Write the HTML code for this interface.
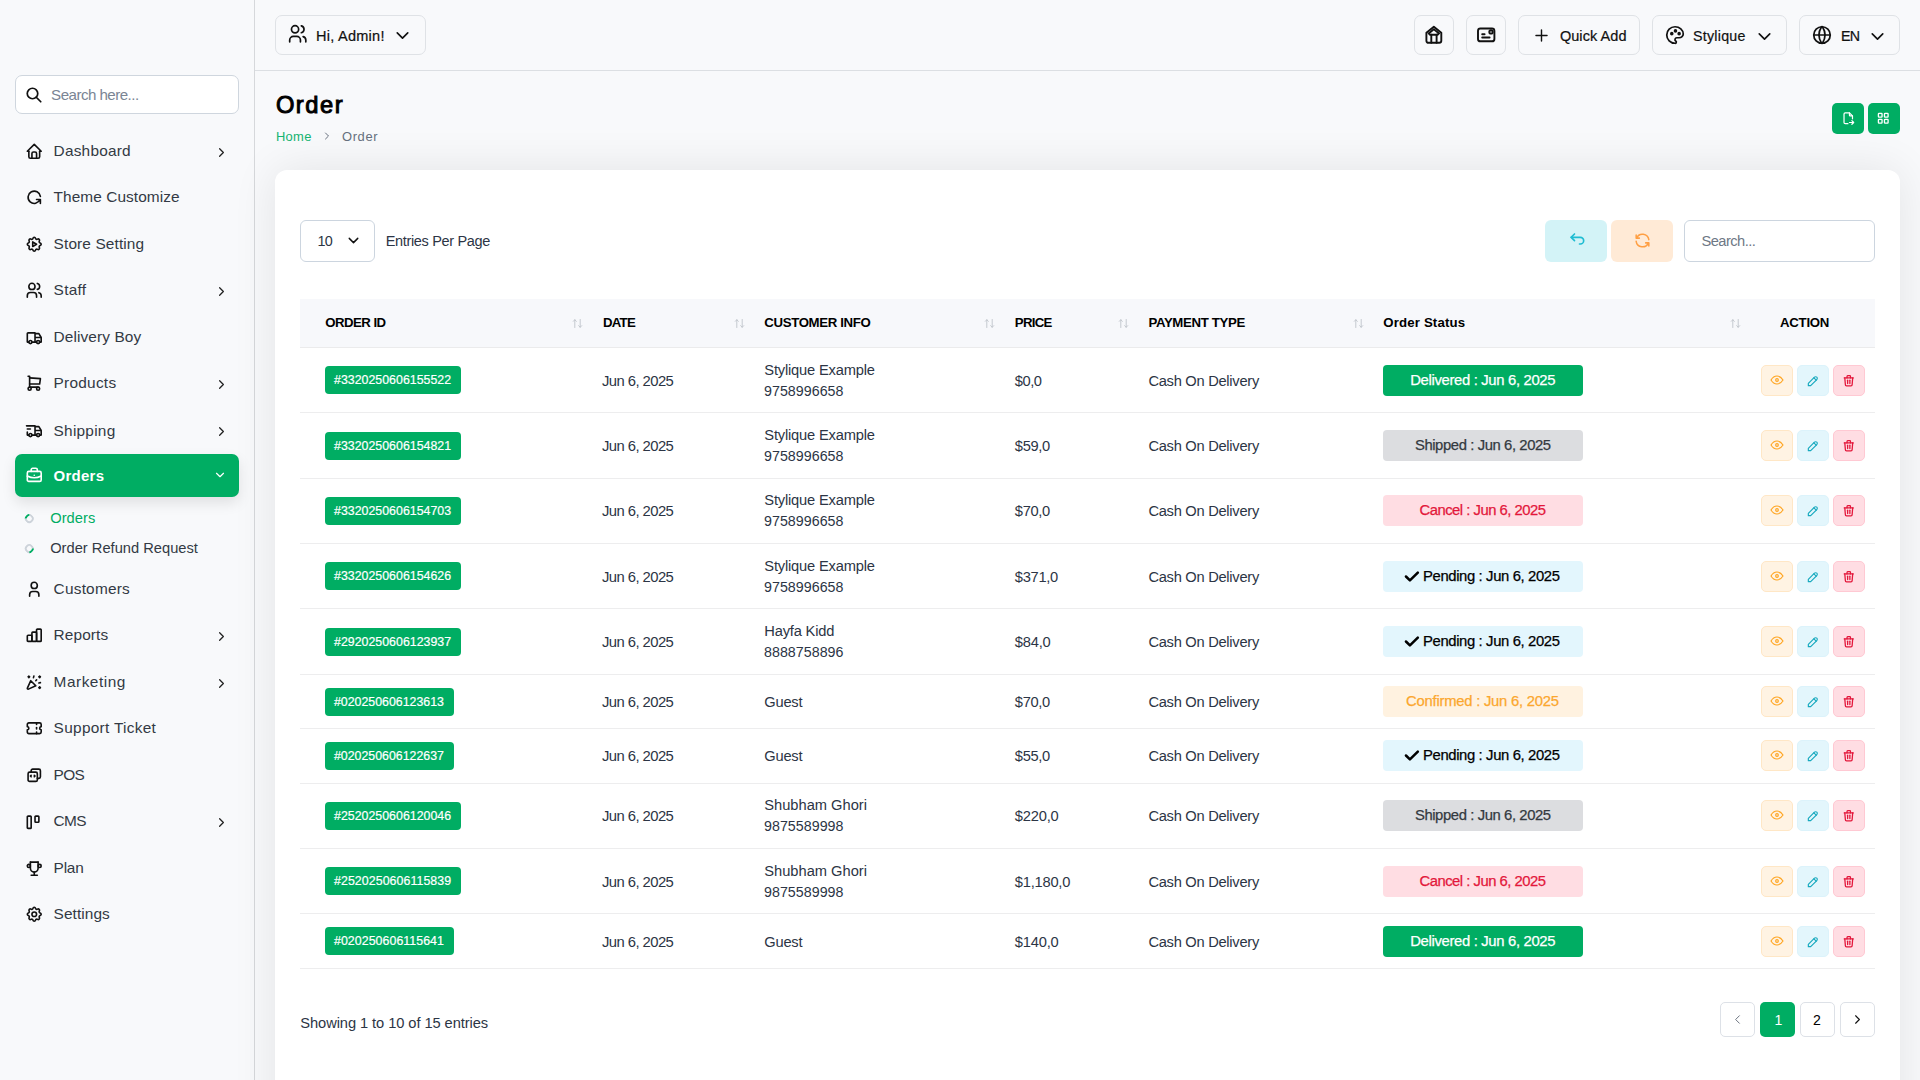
<!DOCTYPE html>
<html><head><meta charset="utf-8"><title>Order</title>
<style>
html,body{margin:0;padding:0;}
body{width:1920px;height:1080px;overflow:hidden;position:relative;background:#f8f9fb;font-family:"Liberation Sans",sans-serif;}
.t{position:absolute;white-space:nowrap;}
.b{position:absolute;}
.ic{position:absolute;overflow:visible;}
</style></head><body>
<div class="b" style="left:254px;top:0px;width:1px;height:1080px;background:#d6d8db;"></div>
<div class="b" style="left:15px;top:75px;width:222px;height:37px;background:#fff;border:1px solid #cfd6de;border-radius:7px;"></div>
<svg class="ic" style="left:25.3px;top:86px;width:18px;height:18px;" viewBox="0 0 24 24" fill="none" stroke="#111" stroke-width="2.3" stroke-linecap="round" stroke-linejoin="round"><path d="M10 10m-7 0a7 7 0 1 0 14 0a7 7 0 1 0 -14 0"/><path d="M21 21l-6 -6"/></svg>
<div class="t" style="left:51.10px;top:86.00px;font-size:15.12px;line-height:17px;letter-spacing:-0.527px;color:#7a8594;">Search here...</div>
<svg class="ic" style="left:25.1px;top:142.0px;width:18.5px;height:18.5px;" viewBox="0 0 24 24" fill="none" stroke="#111" stroke-width="2.1" stroke-linecap="round" stroke-linejoin="round"><path d="M5 12l-2 0l9 -9l9 9l-2 0"/><path d="M5 12v7a2 2 0 0 0 2 2h10a2 2 0 0 0 2 -2v-7"/><path d="M9 21v-6a2 2 0 0 1 2 -2h2a2 2 0 0 1 2 2v6"/></svg>
<div class="t" style="left:53.60px;top:142.00px;font-size:15.41px;line-height:17px;letter-spacing:0.204px;color:#333a44;">Dashboard</div>
<svg class="ic" style="left:213.5px;top:144.5px;width:15px;height:15px;" viewBox="0 0 24 24" fill="none" stroke="#222" stroke-width="2" stroke-linecap="round" stroke-linejoin="round"><path d="M9 6l6 6l-6 6"/></svg>
<svg class="ic" style="left:25.1px;top:188.0px;width:18.5px;height:18.5px;" viewBox="0 0 24 24" fill="none" stroke="#111" stroke-width="2.1" stroke-linecap="round" stroke-linejoin="round"><path d="M19.95 11a8 8 0 1 0 -.5 4m.5 5v-5h-5"/></svg>
<div class="t" style="left:53.60px;top:188.00px;font-size:15.41px;line-height:17px;letter-spacing:0.071px;color:#333a44;">Theme Customize</div>
<svg class="ic" style="left:25.1px;top:235.2px;width:18.5px;height:18.5px;" viewBox="0 0 24 24" fill="none" stroke="#111" stroke-width="2.1" stroke-linecap="round" stroke-linejoin="round"><path d="M10.325 4.317c.426 -1.756 2.924 -1.756 3.35 0a1.724 1.724 0 0 0 2.573 1.066c1.543 -.94 3.31 .826 2.37 2.37a1.724 1.724 0 0 0 1.065 2.572c1.756 .426 1.756 2.924 0 3.35a1.724 1.724 0 0 0 -1.066 2.573c.94 1.543 -.826 3.31 -2.37 2.37a1.724 1.724 0 0 0 -2.572 1.065c-.426 1.756 -2.924 1.756 -3.35 0a1.724 1.724 0 0 0 -2.573 -1.066c-1.543 .94 -3.31 -.826 -2.37 -2.37a1.724 1.724 0 0 0 -1.065 -2.572c-1.756 -.426 -1.756 -2.924 0 -3.35a1.724 1.724 0 0 0 1.066 -2.573c-.94 -1.543 .826 -3.31 2.37 -2.37c1 .608 2.296 .07 2.572 -1.065z"/><path d="M10 9v6l5 -3z"/></svg>
<div class="t" style="left:53.60px;top:235.00px;font-size:15.41px;line-height:17px;letter-spacing:0.119px;color:#333a44;">Store Setting</div>
<svg class="ic" style="left:25.1px;top:281.3px;width:18.5px;height:18.5px;" viewBox="0 0 24 24" fill="none" stroke="#111" stroke-width="2.1" stroke-linecap="round" stroke-linejoin="round"><path d="M9 7m-4 0a4 4 0 1 0 8 0a4 4 0 1 0 -8 0"/><path d="M3 21v-2a4 4 0 0 1 4 -4h4a4 4 0 0 1 4 4v2"/><path d="M16 3.13a4 4 0 0 1 0 7.75"/><path d="M21 21v-2a4 4 0 0 0 -3 -3.85"/></svg>
<div class="t" style="left:53.60px;top:281.00px;font-size:15.41px;line-height:17px;letter-spacing:0.264px;color:#333a44;">Staff</div>
<svg class="ic" style="left:213.5px;top:283.8px;width:15px;height:15px;" viewBox="0 0 24 24" fill="none" stroke="#222" stroke-width="2" stroke-linecap="round" stroke-linejoin="round"><path d="M9 6l6 6l-6 6"/></svg>
<svg class="ic" style="left:25.1px;top:328.5px;width:18.5px;height:18.5px;" viewBox="0 0 24 24" fill="none" stroke="#111" stroke-width="2.1" stroke-linecap="round" stroke-linejoin="round"><path d="M7 17m-2 0a2 2 0 1 0 4 0a2 2 0 1 0 -4 0"/><path d="M17 17m-2 0a2 2 0 1 0 4 0a2 2 0 1 0 -4 0"/><path d="M5 17h-2v-11a1 1 0 0 1 1 -1h9v12m-4 0h6m4 0h2v-6h-8m0 -5h5l3 5"/></svg>
<div class="t" style="left:53.60px;top:328.00px;font-size:15.41px;line-height:17px;letter-spacing:0.102px;color:#333a44;">Delivery Boy</div>
<svg class="ic" style="left:25.1px;top:374.3px;width:18.5px;height:18.5px;" viewBox="0 0 24 24" fill="none" stroke="#111" stroke-width="2.1" stroke-linecap="round" stroke-linejoin="round"><path d="M6 19m-2 0a2 2 0 1 0 4 0a2 2 0 1 0 -4 0"/><path d="M17 19m-2 0a2 2 0 1 0 4 0a2 2 0 1 0 -4 0"/><path d="M17 17h-11v-14h-2"/><path d="M6 5l14 1l-1 7h-13"/></svg>
<div class="t" style="left:53.60px;top:374.00px;font-size:15.41px;line-height:17px;letter-spacing:0.243px;color:#333a44;">Products</div>
<svg class="ic" style="left:213.5px;top:376.8px;width:15px;height:15px;" viewBox="0 0 24 24" fill="none" stroke="#222" stroke-width="2" stroke-linecap="round" stroke-linejoin="round"><path d="M9 6l6 6l-6 6"/></svg>
<svg class="ic" style="left:25.1px;top:421.6px;width:18.5px;height:18.5px;" viewBox="0 0 24 24" fill="none" stroke="#111" stroke-width="2.1" stroke-linecap="round" stroke-linejoin="round"><path d="M7 17m-2 0a2 2 0 1 0 4 0a2 2 0 1 0 -4 0"/><path d="M17 17m-2 0a2 2 0 1 0 4 0a2 2 0 1 0 -4 0"/><path d="M5 17h-2v-4m-1 -8h11v12m-4 0h6m4 0h2v-6h-8m0 -5h5l3 5"/><path d="M3 9l4 0"/></svg>
<div class="t" style="left:53.60px;top:422.00px;font-size:15.41px;line-height:17px;letter-spacing:0.234px;color:#333a44;">Shipping</div>
<svg class="ic" style="left:213.5px;top:424.1px;width:15px;height:15px;" viewBox="0 0 24 24" fill="none" stroke="#222" stroke-width="2" stroke-linecap="round" stroke-linejoin="round"><path d="M9 6l6 6l-6 6"/></svg>
<svg class="ic" style="left:25.1px;top:580.0px;width:18.5px;height:18.5px;" viewBox="0 0 24 24" fill="none" stroke="#111" stroke-width="2.1" stroke-linecap="round" stroke-linejoin="round"><path d="M8 7a4 4 0 1 0 8 0a4 4 0 0 0 -8 0"/><path d="M6 21v-2a4 4 0 0 1 4 -4h4a4 4 0 0 1 4 4v2"/></svg>
<div class="t" style="left:53.60px;top:580.00px;font-size:15.41px;line-height:17px;letter-spacing:0.213px;color:#333a44;">Customers</div>
<svg class="ic" style="left:25.1px;top:626.3px;width:18.5px;height:18.5px;" viewBox="0 0 24 24" fill="none" stroke="#111" stroke-width="2.1" stroke-linecap="round" stroke-linejoin="round"><path d="M3 13a1 1 0 0 1 1 -1h4a1 1 0 0 1 1 1v6a1 1 0 0 1 -1 1h-4a1 1 0 0 1 -1 -1z"/><path d="M9 9a1 1 0 0 1 1 -1h4a1 1 0 0 1 1 1v10a1 1 0 0 1 -1 1h-4a1 1 0 0 1 -1 -1z"/><path d="M15 5a1 1 0 0 1 1 -1h4a1 1 0 0 1 1 1v14a1 1 0 0 1 -1 1h-4a1 1 0 0 1 -1 -1z"/></svg>
<div class="t" style="left:53.60px;top:626.00px;font-size:15.41px;line-height:17px;letter-spacing:0.093px;color:#333a44;">Reports</div>
<svg class="ic" style="left:213.5px;top:628.8px;width:15px;height:15px;" viewBox="0 0 24 24" fill="none" stroke="#222" stroke-width="2" stroke-linecap="round" stroke-linejoin="round"><path d="M9 6l6 6l-6 6"/></svg>
<svg class="ic" style="left:25.1px;top:673.4px;width:18.5px;height:18.5px;" viewBox="0 0 24 24" fill="none" stroke="#111" stroke-width="2.1" stroke-linecap="round" stroke-linejoin="round"><path d="M4 5h2"/><path d="M5 4v2"/><path d="M11.5 4l-.5 2"/><path d="M18 5h2"/><path d="M19 4v2"/><path d="M15 9l-1 1"/><path d="M18 13l2 -.5"/><path d="M18 19h2"/><path d="M19 18v2"/><path d="M14 16.518l-6.518 -6.518l-4.39 9.58a1 1 0 0 0 1.329 1.329l9.579 -4.39z"/></svg>
<div class="t" style="left:53.60px;top:673.00px;font-size:15.41px;line-height:17px;letter-spacing:0.506px;color:#333a44;">Marketing</div>
<svg class="ic" style="left:213.5px;top:675.9px;width:15px;height:15px;" viewBox="0 0 24 24" fill="none" stroke="#222" stroke-width="2" stroke-linecap="round" stroke-linejoin="round"><path d="M9 6l6 6l-6 6"/></svg>
<svg class="ic" style="left:25.1px;top:719.2px;width:18.5px;height:18.5px;" viewBox="0 0 24 24" fill="none" stroke="#111" stroke-width="2.1" stroke-linecap="round" stroke-linejoin="round"><path d="M15 5l0 2"/><path d="M15 11l0 2"/><path d="M15 17l0 2"/><path d="M5 5h14a2 2 0 0 1 2 2v3a2 2 0 0 0 0 4v3a2 2 0 0 1 -2 2h-14a2 2 0 0 1 -2 -2v-3a2 2 0 0 0 0 -4v-3a2 2 0 0 1 2 -2"/></svg>
<div class="t" style="left:53.60px;top:719.00px;font-size:15.41px;line-height:17px;letter-spacing:0.294px;color:#333a44;">Support Ticket</div>
<svg class="ic" style="left:25.1px;top:766.1px;width:18.5px;height:18.5px;" viewBox="0 0 24 24" fill="none" stroke="#111" stroke-width="2.1" stroke-linecap="round" stroke-linejoin="round"><path d="M8 8v-2a2 2 0 0 1 2 -2h8a2 2 0 0 1 2 2v8a2 2 0 0 1 -2 2h-2"/><path d="M4 10a2 2 0 0 1 2 -2h8a2 2 0 0 1 2 2v8a2 2 0 0 1 -2 2h-8a2 2 0 0 1 -2 -2z"/><path d="M8 12l-1 1l1 1"/><path d="M12 12l1 1l-1 1"/></svg>
<div class="t" style="left:53.60px;top:766.00px;font-size:15.41px;line-height:17px;letter-spacing:-0.700px;color:#333a44;">POS</div>
<svg class="ic" style="left:25.1px;top:812.5px;width:18.5px;height:18.5px;" viewBox="0 0 24 24" fill="none" stroke="#111" stroke-width="2.1" stroke-linecap="round" stroke-linejoin="round"><path d="M4 4h3a1 1 0 0 1 1 1v14a1 1 0 0 1 -1 1h-3a1 1 0 0 1 -1 -1v-14a1 1 0 0 1 1 -1z"/><path d="M14 4h3a1 1 0 0 1 1 1v6a1 1 0 0 1 -1 1h-3a1 1 0 0 1 -1 -1v-6a1 1 0 0 1 1 -1z"/></svg>
<div class="t" style="left:53.60px;top:812.00px;font-size:15.41px;line-height:17px;letter-spacing:-0.700px;color:#333a44;">CMS</div>
<svg class="ic" style="left:213.5px;top:815.0px;width:15px;height:15px;" viewBox="0 0 24 24" fill="none" stroke="#222" stroke-width="2" stroke-linecap="round" stroke-linejoin="round"><path d="M9 6l6 6l-6 6"/></svg>
<svg class="ic" style="left:25.1px;top:859.0px;width:18.5px;height:18.5px;" viewBox="0 0 24 24" fill="none" stroke="#111" stroke-width="2.1" stroke-linecap="round" stroke-linejoin="round"><path d="M8 21l8 0"/><path d="M12 17l0 4"/><path d="M7 4l10 0"/><path d="M17 4v8a5 5 0 0 1 -10 0v-8"/><path d="M5 9m-2 0a2 2 0 1 0 4 0a2 2 0 1 0 -4 0"/><path d="M19 9m-2 0a2 2 0 1 0 4 0a2 2 0 1 0 -4 0"/></svg>
<div class="t" style="left:53.60px;top:859.00px;font-size:15.41px;line-height:17px;letter-spacing:-0.210px;color:#333a44;">Plan</div>
<svg class="ic" style="left:25.1px;top:905.0px;width:18.5px;height:18.5px;" viewBox="0 0 24 24" fill="none" stroke="#111" stroke-width="2.1" stroke-linecap="round" stroke-linejoin="round"><path d="M10.325 4.317c.426 -1.756 2.924 -1.756 3.35 0a1.724 1.724 0 0 0 2.573 1.066c1.543 -.94 3.31 .826 2.37 2.37a1.724 1.724 0 0 0 1.065 2.572c1.756 .426 1.756 2.924 0 3.35a1.724 1.724 0 0 0 -1.066 2.573c.94 1.543 -.826 3.31 -2.37 2.37a1.724 1.724 0 0 0 -2.572 1.065c-.426 1.756 -2.924 1.756 -3.35 0a1.724 1.724 0 0 0 -2.573 -1.066c-1.543 .94 -3.31 -.826 -2.37 -2.37a1.724 1.724 0 0 0 -1.065 -2.572c-1.756 -.426 -1.756 -2.924 0 -3.35a1.724 1.724 0 0 0 1.066 -2.573c-.94 -1.543 .826 -3.31 2.37 -2.37c1 .608 2.296 .07 2.572 -1.065z"/><path d="M9 12a3 3 0 1 0 6 0a3 3 0 0 0 -6 0"/></svg>
<div class="t" style="left:53.60px;top:905.00px;font-size:15.41px;line-height:17px;letter-spacing:0.076px;color:#333a44;">Settings</div>
<div class="b" style="left:15px;top:454px;width:224px;height:43px;background:#00ad63;border-radius:7px;box-shadow:0 6px 14px rgba(0,0,0,0.10);"></div>
<svg class="ic" style="left:25.1px;top:466.2px;width:18.5px;height:18.5px;" viewBox="0 0 24 24" fill="none" stroke="#fff" stroke-width="2.1" stroke-linecap="round" stroke-linejoin="round"><path d="M3 7m0 2a2 2 0 0 1 2 -2h14a2 2 0 0 1 2 2v9a2 2 0 0 1 -2 2h-14a2 2 0 0 1 -2 -2z"/><path d="M8 7v-2a2 2 0 0 1 2 -2h4a2 2 0 0 1 2 2v2"/><path d="M12 12l0 .01"/><path d="M3 13a20 20 0 0 0 18 0"/></svg>
<div class="t" style="left:53.50px;top:467.00px;font-size:14.97px;line-height:17px;letter-spacing:0.282px;color:#fff;font-weight:700;">Orders</div>
<svg class="ic" style="left:212.5px;top:468px;width:14px;height:14px;" viewBox="0 0 24 24" fill="none" stroke="#fff" stroke-width="2" stroke-linecap="round" stroke-linejoin="round"><path d="M6 9l6 6l6 -6"/></svg>
<div class="b" style="left:24.7px;top:513.7px;width:4.6px;height:4.6px;border:2px solid #cdd3da;border-radius:50%;border-left-color:#00ad63;transform:rotate(45deg);"></div>
<div class="t" style="left:50.20px;top:510.00px;font-size:14.68px;line-height:16px;letter-spacing:0.047px;color:#00ad63;">Orders</div>
<div class="b" style="left:24.7px;top:543.8px;width:4.6px;height:4.6px;border:2px solid #cdd3da;border-radius:50%;border-right-color:#00ad63;transform:rotate(45deg);"></div>
<div class="t" style="left:50.20px;top:540.00px;font-size:14.68px;line-height:16px;letter-spacing:0.005px;color:#333a44;">Order Refund Request</div>
<div class="b" style="left:255px;top:70px;width:1665px;height:1px;background:#dcdfe3;"></div>
<div class="b" style="left:275px;top:15px;width:149px;height:38px;background:#f8f9fb;border:1px solid #dfe2e6;border-radius:7px;"></div>
<svg class="ic" style="left:287px;top:22.5px;width:21.5px;height:21.5px;" viewBox="0 0 24 24" fill="none" stroke="#111" stroke-width="1.9" stroke-linecap="round" stroke-linejoin="round"><path d="M9 7m-4 0a4 4 0 1 0 8 0a4 4 0 1 0 -8 0"/><path d="M3 21v-2a4 4 0 0 1 4 -4h4a4 4 0 0 1 4 4v2"/><path d="M16 3.13a4 4 0 0 1 0 7.75"/><path d="M21 21v-2a4 4 0 0 0 -3 -3.85"/></svg>
<div class="t" style="left:316.00px;top:28.00px;font-size:14.53px;line-height:16px;letter-spacing:0.252px;color:#111;-webkit-text-stroke:0.2px #111;">Hi, Admin!</div>
<svg class="ic" style="left:392.4px;top:25px;width:21px;height:21px;" viewBox="0 0 24 24" fill="none" stroke="#111" stroke-width="1.9" stroke-linecap="round" stroke-linejoin="round"><path d="M6 9l6 6l6 -6"/></svg>
<div class="b" style="left:1414px;top:15px;width:38px;height:38px;background:#f8f9fb;border:1px solid #dfe2e6;border-radius:7px;"></div>
<svg class="ic" style="left:1420px;top:20px;width:30px;height:30px" viewBox="0 0 30 30" fill="none" stroke="#111" stroke-width="1.9" stroke-linecap="round" stroke-linejoin="round"><path d="M6.4 12.8L13.85 6.8L21.3 12.8V20.8A2 2 0 0 1 19.3 22.8H8.4A2 2 0 0 1 6.4 20.8Z"/><path d="M8.6 13.4L13.85 9.2L19.1 13.4L17.6 14.8H10.1Z"/><path d="M11.3 14.8V22.8M16.6 14.8V22.8"/></svg>
<div class="b" style="left:1466px;top:15px;width:38px;height:38px;background:#f8f9fb;border:1px solid #dfe2e6;border-radius:7px;"></div>
<svg class="ic" style="left:1470px;top:20px;width:30px;height:30px" viewBox="0 0 30 30" fill="none" stroke="#111" stroke-width="1.9" stroke-linecap="round" stroke-linejoin="round"><rect x="8" y="8.5" width="16.4" height="12.8" rx="2.4"/><circle cx="21" cy="11.9" r="1.7"/><path d="M12.2 14.2H14.6M12.2 17.5H19.6"/></svg>
<div class="b" style="left:1518px;top:15px;width:120px;height:38px;background:#f8f9fb;border:1px solid #dfe2e6;border-radius:7px;"></div>
<svg class="ic" style="left:1532.3px;top:26px;width:19px;height:19px;" viewBox="0 0 24 24" fill="none" stroke="#111" stroke-width="1.8" stroke-linecap="round" stroke-linejoin="round"><path d="M12 5l0 14"/><path d="M5 12l14 0"/></svg>
<div class="t" style="left:1559.90px;top:28.00px;font-size:14.53px;line-height:16px;letter-spacing:0.056px;color:#111;-webkit-text-stroke:0.2px #111;">Quick Add</div>
<div class="b" style="left:1652px;top:15px;width:133px;height:38px;background:#f8f9fb;border:1px solid #dfe2e6;border-radius:7px;"></div>
<svg class="ic" style="left:1664.1px;top:24.1px;width:22px;height:22px;" viewBox="0 0 24 24" fill="none" stroke="#111" stroke-width="1.9" stroke-linecap="round" stroke-linejoin="round"><path d="M12 21a9 9 0 0 1 0 -18c4.97 0 9 3.582 9 8c0 1.06 -.474 2.078 -1.318 2.828c-.844 .75 -1.989 1.172 -3.182 1.172h-2.5a2 2 0 0 0 -1 3.75a1.3 1.3 0 0 1 -1 2.25"/><path d="M8.5 10.5m-1 0a1 1 0 1 0 2 0a1 1 0 1 0 -2 0"/><path d="M12.5 7.5m-1 0a1 1 0 1 0 2 0a1 1 0 1 0 -2 0"/><path d="M16.5 10.5m-1 0a1 1 0 1 0 2 0a1 1 0 1 0 -2 0"/></svg>
<div class="t" style="left:1693.00px;top:28.00px;font-size:14.24px;line-height:16px;letter-spacing:0.260px;color:#111;-webkit-text-stroke:0.2px #111;">Stylique</div>
<svg class="ic" style="left:1753.8px;top:25.5px;width:21px;height:21px;" viewBox="0 0 24 24" fill="none" stroke="#111" stroke-width="1.9" stroke-linecap="round" stroke-linejoin="round"><path d="M6 9l6 6l6 -6"/></svg>
<div class="b" style="left:1799px;top:15px;width:99px;height:38px;background:#f8f9fb;border:1px solid #dfe2e6;border-radius:7px;"></div>
<svg class="ic" style="left:1811.1px;top:24.1px;width:22px;height:22px;" viewBox="0 0 24 24" fill="none" stroke="#111" stroke-width="1.9" stroke-linecap="round" stroke-linejoin="round"><path d="M3 12a9 9 0 1 0 18 0a9 9 0 0 0 -18 0"/><path d="M3.6 12h16.8"/><path d="M11.5 3a17 17 0 0 0 0 18"/><path d="M12.5 3a17 17 0 0 1 0 18"/></svg>
<div class="t" style="left:1841.00px;top:28.00px;font-size:14.24px;line-height:16px;letter-spacing:-0.700px;color:#111;-webkit-text-stroke:0.2px #111;">EN</div>
<svg class="ic" style="left:1866.6px;top:25.5px;width:21px;height:21px;" viewBox="0 0 24 24" fill="none" stroke="#111" stroke-width="1.9" stroke-linecap="round" stroke-linejoin="round"><path d="M6 9l6 6l6 -6"/></svg>
<div class="t" style="left:275.90px;top:92.00px;font-size:23.69px;line-height:26px;letter-spacing:1.536px;color:#000;-webkit-text-stroke:1.0px #000;">Order</div>
<div class="t" style="left:275.90px;top:129.00px;font-size:12.94px;line-height:15px;letter-spacing:0.329px;color:#16b472;">Home</div>
<svg class="ic" style="left:321px;top:130px;width:12px;height:12px;" viewBox="0 0 24 24" fill="none" stroke="#596270" stroke-width="1.8" stroke-linecap="round" stroke-linejoin="round"><path d="M9 6l6 6l-6 6"/></svg>
<div class="t" style="left:342.00px;top:129.00px;font-size:12.94px;line-height:15px;letter-spacing:0.609px;color:#66707e;">Order</div>
<div class="b" style="left:1832px;top:103px;width:32px;height:31px;background:#00ad63;border-radius:5px;"></div>
<svg class="ic" style="left:1841.2px;top:111.4px;width:14.5px;height:14.5px;" viewBox="0 0 24 24" fill="none" stroke="#fff" stroke-width="2" stroke-linecap="round" stroke-linejoin="round"><path d="M14 3v4a1 1 0 0 0 1 1h4"/><path d="M11.5 21h-4.5a2 2 0 0 1 -2 -2v-14a2 2 0 0 1 2 -2h7l5 5v5m-5 6h7m-3 -3l3 3l-3 3"/></svg>
<div class="b" style="left:1868px;top:103px;width:32px;height:31px;background:#00ad63;border-radius:5px;"></div>
<svg class="ic" style="left:1876.4px;top:111px;width:14.5px;height:14.5px;" viewBox="0 0 24 24" fill="none" stroke="#fff" stroke-width="2.2" stroke-linecap="round" stroke-linejoin="round"><path d="M5 4h4a1 1 0 0 1 1 1v4a1 1 0 0 1 -1 1h-4a1 1 0 0 1 -1 -1v-4a1 1 0 0 1 1 -1"/><path d="M15 4h4a1 1 0 0 1 1 1v4a1 1 0 0 1 -1 1h-4a1 1 0 0 1 -1 -1v-4a1 1 0 0 1 1 -1"/><path d="M5 14h4a1 1 0 0 1 1 1v4a1 1 0 0 1 -1 1h-4a1 1 0 0 1 -1 -1v-4a1 1 0 0 1 1 -1"/><path d="M15 14h4a1 1 0 0 1 1 1v4a1 1 0 0 1 -1 1h-4a1 1 0 0 1 -1 -1v-4a1 1 0 0 1 1 -1"/></svg>
<div class="b" style="left:275px;top:170px;width:1625px;height:1000px;background:#fff;border-radius:12px;box-shadow:0 0 45px rgba(0,0,0,0.09);"></div>
<div class="b" style="left:300px;top:220px;width:73px;height:40px;background:#fff;border:1px solid #ccd5df;border-radius:6px;"></div>
<div class="t" style="left:317.50px;top:233.00px;font-size:14.39px;line-height:16px;letter-spacing:-0.700px;color:#2c3545;">10</div>
<svg class="ic" style="left:344.5px;top:231.8px;width:17px;height:17px;" viewBox="0 0 24 24" fill="none" stroke="#111" stroke-width="2" stroke-linecap="round" stroke-linejoin="round"><path d="M6 9l6 6l6 -6"/></svg>
<div class="t" style="left:385.70px;top:233.00px;font-size:14.53px;line-height:16px;letter-spacing:-0.339px;color:#2c3545;">Entries Per Page</div>
<div class="b" style="left:1545px;top:220px;width:62px;height:42px;background:#d3f3f7;border-radius:6px;"></div>
<svg class="ic" style="left:1567px;top:229px;width:20px;height:20px;" viewBox="0 0 24 24" fill="none" stroke="#1fbcd2" stroke-width="2" stroke-linecap="round" stroke-linejoin="round"><path d="M9 14l-4 -4l4 -4"/><path d="M5 10h11a4 4 0 1 1 0 8h-1"/></svg>
<div class="b" style="left:1611px;top:220px;width:62px;height:42px;background:#ffead6;border-radius:6px;"></div>
<svg class="ic" style="left:1633px;top:231px;width:19px;height:19px;" viewBox="0 0 24 24" fill="none" stroke="#ff9f43" stroke-width="1.9" stroke-linecap="round" stroke-linejoin="round"><path d="M20 11a8.1 8.1 0 0 0 -15.5 -2m-.5 -4v4h4"/><path d="M4 13a8.1 8.1 0 0 0 15.5 2m.5 4v-4h-4"/></svg>
<div class="b" style="left:1684px;top:220px;width:189px;height:40px;background:#fff;border:1px solid #ccd5df;border-radius:6px;"></div>
<div class="t" style="left:1701.50px;top:233.00px;font-size:14.68px;line-height:16px;letter-spacing:-0.544px;color:#6e7885;">Search...</div>
<div class="b" style="left:300px;top:299px;width:1575px;height:48px;background:#f7f8fb;"></div>
<div class="b" style="left:300px;top:347px;width:1575px;height:1px;background:#ebebec;"></div>
<div class="t" style="left:325.30px;top:315.00px;font-size:13.23px;line-height:15px;letter-spacing:-0.552px;color:#000;font-weight:700;">ORDER ID</div>
<svg class="ic" style="left:572px;top:318.5px;width:11px;height:9px" viewBox="0 0 11 10" fill="none" stroke="#bfc4cb" stroke-width="1" stroke-linecap="round" stroke-linejoin="round"><path d="M2.5 9.5V0.8M0.8 2.6L2.5 0.8L4.2 2.6"/><path d="M8.5 0.5V9.2M6.8 7.4L8.5 9.2L10.2 7.4"/></svg>
<div class="t" style="left:602.90px;top:315.00px;font-size:13.23px;line-height:15px;letter-spacing:-0.700px;color:#000;font-weight:700;">DATE</div>
<svg class="ic" style="left:733.6px;top:318.5px;width:11px;height:9px" viewBox="0 0 11 10" fill="none" stroke="#bfc4cb" stroke-width="1" stroke-linecap="round" stroke-linejoin="round"><path d="M2.5 9.5V0.8M0.8 2.6L2.5 0.8L4.2 2.6"/><path d="M8.5 0.5V9.2M6.8 7.4L8.5 9.2L10.2 7.4"/></svg>
<div class="t" style="left:764.30px;top:315.00px;font-size:13.23px;line-height:15px;letter-spacing:-0.352px;color:#000;font-weight:700;">CUSTOMER INFO</div>
<svg class="ic" style="left:984.4px;top:318.5px;width:11px;height:9px" viewBox="0 0 11 10" fill="none" stroke="#bfc4cb" stroke-width="1" stroke-linecap="round" stroke-linejoin="round"><path d="M2.5 9.5V0.8M0.8 2.6L2.5 0.8L4.2 2.6"/><path d="M8.5 0.5V9.2M6.8 7.4L8.5 9.2L10.2 7.4"/></svg>
<div class="t" style="left:1014.80px;top:315.00px;font-size:13.23px;line-height:15px;letter-spacing:-0.700px;color:#000;font-weight:700;">PRICE</div>
<svg class="ic" style="left:1118.3px;top:318.5px;width:11px;height:9px" viewBox="0 0 11 10" fill="none" stroke="#bfc4cb" stroke-width="1" stroke-linecap="round" stroke-linejoin="round"><path d="M2.5 9.5V0.8M0.8 2.6L2.5 0.8L4.2 2.6"/><path d="M8.5 0.5V9.2M6.8 7.4L8.5 9.2L10.2 7.4"/></svg>
<div class="t" style="left:1148.40px;top:315.00px;font-size:13.23px;line-height:15px;letter-spacing:-0.336px;color:#000;font-weight:700;">PAYMENT TYPE</div>
<svg class="ic" style="left:1352.9px;top:318.5px;width:11px;height:9px" viewBox="0 0 11 10" fill="none" stroke="#bfc4cb" stroke-width="1" stroke-linecap="round" stroke-linejoin="round"><path d="M2.5 9.5V0.8M0.8 2.6L2.5 0.8L4.2 2.6"/><path d="M8.5 0.5V9.2M6.8 7.4L8.5 9.2L10.2 7.4"/></svg>
<div class="t" style="left:1383.20px;top:315.00px;font-size:13.23px;line-height:15px;letter-spacing:0.171px;color:#000;font-weight:700;">Order Status</div>
<svg class="ic" style="left:1729.8px;top:318.5px;width:11px;height:9px" viewBox="0 0 11 10" fill="none" stroke="#bfc4cb" stroke-width="1" stroke-linecap="round" stroke-linejoin="round"><path d="M2.5 9.5V0.8M0.8 2.6L2.5 0.8L4.2 2.6"/><path d="M8.5 0.5V9.2M6.8 7.4L8.5 9.2L10.2 7.4"/></svg>
<div class="t" style="left:1780.00px;top:315.00px;font-size:13.23px;line-height:15px;letter-spacing:-0.260px;color:#000;font-weight:700;">ACTION</div>
<div class="b" style="left:300px;top:412px;width:1575px;height:1px;background:#ededee;"></div>
<div class="b" style="left:325px;top:366px;width:136px;height:28px;background:#00ad63;border-radius:4px;"></div>
<div class="t" style="left:334.00px;top:373.00px;font-size:12.35px;line-height:14px;letter-spacing:0.024px;color:#fff;-webkit-text-stroke:0.2px #fff;">#3320250606155522</div>
<div class="t" style="left:602.00px;top:373.00px;font-size:14.83px;line-height:16px;letter-spacing:-0.569px;color:#2c3545;">Jun 6, 2025</div>
<div class="t" style="left:764.30px;top:362.00px;font-size:14.68px;line-height:16px;letter-spacing:-0.181px;color:#2c3545;">Stylique Example</div>
<div class="t" style="left:764.00px;top:383.00px;font-size:14.24px;line-height:16px;letter-spacing:0.030px;color:#2c3545;">9758996658</div>
<div class="t" style="left:1014.80px;top:373.00px;font-size:14.68px;line-height:16px;letter-spacing:-0.456px;color:#2c3545;">$0,0</div>
<div class="t" style="left:1148.40px;top:373.00px;font-size:14.68px;line-height:16px;letter-spacing:-0.276px;color:#2c3545;">Cash On Delivery</div>
<div class="b" style="left:1383px;top:365px;width:200px;height:31px;background:#00ad63;border-radius:4px;"></div>
<div class="t" style="left:1410.20px;top:372.00px;font-size:14.83px;line-height:16px;letter-spacing:-0.326px;color:#fff;-webkit-text-stroke:0.25px #fff;">Delivered : Jun 6, 2025</div>
<div class="b" style="left:1761px;top:365px;width:30px;height:29px;background:#fff3e3;border:1px solid #ffe7c6;border-radius:5px;"></div>
<svg class="ic" style="left:1768.5px;top:372.4px;width:16px;height:16px;" viewBox="0 0 24 24" fill="none" stroke="#ffa41f" stroke-width="1.7" stroke-linecap="round" stroke-linejoin="round"><path d="M10 12a2 2 0 1 0 4 0a2 2 0 0 0 -4 0"/><path d="M21 12c-2.4 4 -5.4 6 -9 6c-3.6 0 -6.6 -2 -9 -6c2.4 -4 5.4 -6 9 -6c3.6 0 6.6 2 9 6"/></svg>
<div class="b" style="left:1797px;top:365px;width:30px;height:29px;background:#e3f6fc;border:1px solid #dcf3fb;border-radius:5px;"></div>
<svg class="ic" style="left:1805.9px;top:374.1px;width:14px;height:14px;" viewBox="0 0 24 24" fill="none" stroke="#17a9be" stroke-width="2" stroke-linecap="round" stroke-linejoin="round"><path d="M4 20h4l10.5 -10.5a2.828 2.828 0 1 0 -4 -4l-10.5 10.5v4"/><path d="M13.5 6.5l4 4"/></svg>
<div class="b" style="left:1833px;top:365px;width:30px;height:29px;background:#ffdde3;border:1px solid #ffc9d3;border-radius:5px;"></div>
<svg class="ic" style="left:1842px;top:373.7px;width:13.5px;height:13.5px;" viewBox="0 0 24 24" fill="none" stroke="#e3173b" stroke-width="2.3" stroke-linecap="round" stroke-linejoin="round"><path d="M4 7l16 0"/><path d="M10 11l0 6"/><path d="M14 11l0 6"/><path d="M5 7l1 12a2 2 0 0 0 2 2h8a2 2 0 0 0 2 -2l1 -12"/><path d="M9 7v-3a1 1 0 0 1 1 -1h4a1 1 0 0 1 1 1v3"/></svg>
<div class="b" style="left:300px;top:478px;width:1575px;height:1px;background:#ededee;"></div>
<div class="b" style="left:325px;top:432px;width:136px;height:28px;background:#00ad63;border-radius:4px;"></div>
<div class="t" style="left:334.00px;top:439.00px;font-size:12.35px;line-height:14px;letter-spacing:0.024px;color:#fff;-webkit-text-stroke:0.2px #fff;">#3320250606154821</div>
<div class="t" style="left:602.00px;top:438.00px;font-size:14.83px;line-height:16px;letter-spacing:-0.569px;color:#2c3545;">Jun 6, 2025</div>
<div class="t" style="left:764.30px;top:427.00px;font-size:14.68px;line-height:16px;letter-spacing:-0.181px;color:#2c3545;">Stylique Example</div>
<div class="t" style="left:764.00px;top:448.00px;font-size:14.24px;line-height:16px;letter-spacing:0.030px;color:#2c3545;">9758996658</div>
<div class="t" style="left:1014.80px;top:438.00px;font-size:14.68px;line-height:16px;letter-spacing:-0.307px;color:#2c3545;">$59,0</div>
<div class="t" style="left:1148.40px;top:438.00px;font-size:14.68px;line-height:16px;letter-spacing:-0.276px;color:#2c3545;">Cash On Delivery</div>
<div class="b" style="left:1383px;top:430px;width:200px;height:31px;background:#dcdde0;border-radius:4px;"></div>
<div class="t" style="left:1414.90px;top:437.00px;font-size:14.83px;line-height:16px;letter-spacing:-0.403px;color:#343a40;-webkit-text-stroke:0.25px #343a40;">Shipped : Jun 6, 2025</div>
<div class="b" style="left:1761px;top:430px;width:30px;height:29px;background:#fff3e3;border:1px solid #ffe7c6;border-radius:5px;"></div>
<svg class="ic" style="left:1768.5px;top:437.4px;width:16px;height:16px;" viewBox="0 0 24 24" fill="none" stroke="#ffa41f" stroke-width="1.7" stroke-linecap="round" stroke-linejoin="round"><path d="M10 12a2 2 0 1 0 4 0a2 2 0 0 0 -4 0"/><path d="M21 12c-2.4 4 -5.4 6 -9 6c-3.6 0 -6.6 -2 -9 -6c2.4 -4 5.4 -6 9 -6c3.6 0 6.6 2 9 6"/></svg>
<div class="b" style="left:1797px;top:430px;width:30px;height:29px;background:#e3f6fc;border:1px solid #dcf3fb;border-radius:5px;"></div>
<svg class="ic" style="left:1805.9px;top:439.1px;width:14px;height:14px;" viewBox="0 0 24 24" fill="none" stroke="#17a9be" stroke-width="2" stroke-linecap="round" stroke-linejoin="round"><path d="M4 20h4l10.5 -10.5a2.828 2.828 0 1 0 -4 -4l-10.5 10.5v4"/><path d="M13.5 6.5l4 4"/></svg>
<div class="b" style="left:1833px;top:430px;width:30px;height:29px;background:#ffdde3;border:1px solid #ffc9d3;border-radius:5px;"></div>
<svg class="ic" style="left:1842px;top:438.7px;width:13.5px;height:13.5px;" viewBox="0 0 24 24" fill="none" stroke="#e3173b" stroke-width="2.3" stroke-linecap="round" stroke-linejoin="round"><path d="M4 7l16 0"/><path d="M10 11l0 6"/><path d="M14 11l0 6"/><path d="M5 7l1 12a2 2 0 0 0 2 2h8a2 2 0 0 0 2 -2l1 -12"/><path d="M9 7v-3a1 1 0 0 1 1 -1h4a1 1 0 0 1 1 1v3"/></svg>
<div class="b" style="left:300px;top:543px;width:1575px;height:1px;background:#ededee;"></div>
<div class="b" style="left:325px;top:497px;width:136px;height:28px;background:#00ad63;border-radius:4px;"></div>
<div class="t" style="left:334.00px;top:504.00px;font-size:12.35px;line-height:14px;letter-spacing:0.024px;color:#fff;-webkit-text-stroke:0.2px #fff;">#3320250606154703</div>
<div class="t" style="left:602.00px;top:503.00px;font-size:14.83px;line-height:16px;letter-spacing:-0.569px;color:#2c3545;">Jun 6, 2025</div>
<div class="t" style="left:764.30px;top:492.00px;font-size:14.68px;line-height:16px;letter-spacing:-0.181px;color:#2c3545;">Stylique Example</div>
<div class="t" style="left:764.00px;top:513.00px;font-size:14.24px;line-height:16px;letter-spacing:0.030px;color:#2c3545;">9758996658</div>
<div class="t" style="left:1014.80px;top:503.00px;font-size:14.68px;line-height:16px;letter-spacing:-0.307px;color:#2c3545;">$70,0</div>
<div class="t" style="left:1148.40px;top:503.00px;font-size:14.68px;line-height:16px;letter-spacing:-0.276px;color:#2c3545;">Cash On Delivery</div>
<div class="b" style="left:1383px;top:495px;width:200px;height:31px;background:#ffdde3;border-radius:4px;"></div>
<div class="t" style="left:1419.50px;top:502.00px;font-size:14.83px;line-height:16px;letter-spacing:-0.500px;color:#e3173b;-webkit-text-stroke:0.25px #e3173b;">Cancel : Jun 6, 2025</div>
<div class="b" style="left:1761px;top:495px;width:30px;height:29px;background:#fff3e3;border:1px solid #ffe7c6;border-radius:5px;"></div>
<svg class="ic" style="left:1768.5px;top:502.4px;width:16px;height:16px;" viewBox="0 0 24 24" fill="none" stroke="#ffa41f" stroke-width="1.7" stroke-linecap="round" stroke-linejoin="round"><path d="M10 12a2 2 0 1 0 4 0a2 2 0 0 0 -4 0"/><path d="M21 12c-2.4 4 -5.4 6 -9 6c-3.6 0 -6.6 -2 -9 -6c2.4 -4 5.4 -6 9 -6c3.6 0 6.6 2 9 6"/></svg>
<div class="b" style="left:1797px;top:495px;width:30px;height:29px;background:#e3f6fc;border:1px solid #dcf3fb;border-radius:5px;"></div>
<svg class="ic" style="left:1805.9px;top:504.1px;width:14px;height:14px;" viewBox="0 0 24 24" fill="none" stroke="#17a9be" stroke-width="2" stroke-linecap="round" stroke-linejoin="round"><path d="M4 20h4l10.5 -10.5a2.828 2.828 0 1 0 -4 -4l-10.5 10.5v4"/><path d="M13.5 6.5l4 4"/></svg>
<div class="b" style="left:1833px;top:495px;width:30px;height:29px;background:#ffdde3;border:1px solid #ffc9d3;border-radius:5px;"></div>
<svg class="ic" style="left:1842px;top:503.7px;width:13.5px;height:13.5px;" viewBox="0 0 24 24" fill="none" stroke="#e3173b" stroke-width="2.3" stroke-linecap="round" stroke-linejoin="round"><path d="M4 7l16 0"/><path d="M10 11l0 6"/><path d="M14 11l0 6"/><path d="M5 7l1 12a2 2 0 0 0 2 2h8a2 2 0 0 0 2 -2l1 -12"/><path d="M9 7v-3a1 1 0 0 1 1 -1h4a1 1 0 0 1 1 1v3"/></svg>
<div class="b" style="left:300px;top:608px;width:1575px;height:1px;background:#ededee;"></div>
<div class="b" style="left:325px;top:562px;width:136px;height:28px;background:#00ad63;border-radius:4px;"></div>
<div class="t" style="left:334.00px;top:569.00px;font-size:12.35px;line-height:14px;letter-spacing:0.024px;color:#fff;-webkit-text-stroke:0.2px #fff;">#3320250606154626</div>
<div class="t" style="left:602.00px;top:569.00px;font-size:14.83px;line-height:16px;letter-spacing:-0.569px;color:#2c3545;">Jun 6, 2025</div>
<div class="t" style="left:764.30px;top:558.00px;font-size:14.68px;line-height:16px;letter-spacing:-0.181px;color:#2c3545;">Stylique Example</div>
<div class="t" style="left:764.00px;top:579.00px;font-size:14.24px;line-height:16px;letter-spacing:0.030px;color:#2c3545;">9758996658</div>
<div class="t" style="left:1014.80px;top:569.00px;font-size:14.68px;line-height:16px;letter-spacing:-0.281px;color:#2c3545;">$371,0</div>
<div class="t" style="left:1148.40px;top:569.00px;font-size:14.68px;line-height:16px;letter-spacing:-0.276px;color:#2c3545;">Cash On Delivery</div>
<div class="b" style="left:1383px;top:561px;width:200px;height:31px;background:#e3f6fd;border-radius:4px;"></div>
<svg class="ic" style="left:1402px;top:567px;width:19px;height:19px;" viewBox="0 0 24 24" fill="none" stroke="#000" stroke-width="3.2" stroke-linecap="round" stroke-linejoin="round"><path d="M5 12l5 5l10 -10"/></svg>
<div class="t" style="left:1423.00px;top:568.00px;font-size:14.83px;line-height:16px;letter-spacing:-0.368px;color:#000;-webkit-text-stroke:0.25px #000;">Pending : Jun 6, 2025</div>
<div class="b" style="left:1761px;top:561px;width:30px;height:29px;background:#fff3e3;border:1px solid #ffe7c6;border-radius:5px;"></div>
<svg class="ic" style="left:1768.5px;top:568.4px;width:16px;height:16px;" viewBox="0 0 24 24" fill="none" stroke="#ffa41f" stroke-width="1.7" stroke-linecap="round" stroke-linejoin="round"><path d="M10 12a2 2 0 1 0 4 0a2 2 0 0 0 -4 0"/><path d="M21 12c-2.4 4 -5.4 6 -9 6c-3.6 0 -6.6 -2 -9 -6c2.4 -4 5.4 -6 9 -6c3.6 0 6.6 2 9 6"/></svg>
<div class="b" style="left:1797px;top:561px;width:30px;height:29px;background:#e3f6fc;border:1px solid #dcf3fb;border-radius:5px;"></div>
<svg class="ic" style="left:1805.9px;top:570.1px;width:14px;height:14px;" viewBox="0 0 24 24" fill="none" stroke="#17a9be" stroke-width="2" stroke-linecap="round" stroke-linejoin="round"><path d="M4 20h4l10.5 -10.5a2.828 2.828 0 1 0 -4 -4l-10.5 10.5v4"/><path d="M13.5 6.5l4 4"/></svg>
<div class="b" style="left:1833px;top:561px;width:30px;height:29px;background:#ffdde3;border:1px solid #ffc9d3;border-radius:5px;"></div>
<svg class="ic" style="left:1842px;top:569.7px;width:13.5px;height:13.5px;" viewBox="0 0 24 24" fill="none" stroke="#e3173b" stroke-width="2.3" stroke-linecap="round" stroke-linejoin="round"><path d="M4 7l16 0"/><path d="M10 11l0 6"/><path d="M14 11l0 6"/><path d="M5 7l1 12a2 2 0 0 0 2 2h8a2 2 0 0 0 2 -2l1 -12"/><path d="M9 7v-3a1 1 0 0 1 1 -1h4a1 1 0 0 1 1 1v3"/></svg>
<div class="b" style="left:300px;top:674px;width:1575px;height:1px;background:#ededee;"></div>
<div class="b" style="left:325px;top:628px;width:136px;height:28px;background:#00ad63;border-radius:4px;"></div>
<div class="t" style="left:334.00px;top:635.00px;font-size:12.35px;line-height:14px;letter-spacing:0.024px;color:#fff;-webkit-text-stroke:0.2px #fff;">#2920250606123937</div>
<div class="t" style="left:602.00px;top:634.00px;font-size:14.83px;line-height:16px;letter-spacing:-0.569px;color:#2c3545;">Jun 6, 2025</div>
<div class="t" style="left:764.30px;top:623.00px;font-size:14.68px;line-height:16px;letter-spacing:-0.180px;color:#2c3545;">Hayfa Kidd</div>
<div class="t" style="left:764.00px;top:644.00px;font-size:14.24px;line-height:16px;letter-spacing:0.030px;color:#2c3545;">8888758896</div>
<div class="t" style="left:1014.80px;top:634.00px;font-size:14.68px;line-height:16px;letter-spacing:-0.182px;color:#2c3545;">$84,0</div>
<div class="t" style="left:1148.40px;top:634.00px;font-size:14.68px;line-height:16px;letter-spacing:-0.276px;color:#2c3545;">Cash On Delivery</div>
<div class="b" style="left:1383px;top:626px;width:200px;height:31px;background:#e3f6fd;border-radius:4px;"></div>
<svg class="ic" style="left:1402px;top:632px;width:19px;height:19px;" viewBox="0 0 24 24" fill="none" stroke="#000" stroke-width="3.2" stroke-linecap="round" stroke-linejoin="round"><path d="M5 12l5 5l10 -10"/></svg>
<div class="t" style="left:1423.00px;top:633.00px;font-size:14.83px;line-height:16px;letter-spacing:-0.368px;color:#000;-webkit-text-stroke:0.25px #000;">Pending : Jun 6, 2025</div>
<div class="b" style="left:1761px;top:626px;width:30px;height:29px;background:#fff3e3;border:1px solid #ffe7c6;border-radius:5px;"></div>
<svg class="ic" style="left:1768.5px;top:633.4px;width:16px;height:16px;" viewBox="0 0 24 24" fill="none" stroke="#ffa41f" stroke-width="1.7" stroke-linecap="round" stroke-linejoin="round"><path d="M10 12a2 2 0 1 0 4 0a2 2 0 0 0 -4 0"/><path d="M21 12c-2.4 4 -5.4 6 -9 6c-3.6 0 -6.6 -2 -9 -6c2.4 -4 5.4 -6 9 -6c3.6 0 6.6 2 9 6"/></svg>
<div class="b" style="left:1797px;top:626px;width:30px;height:29px;background:#e3f6fc;border:1px solid #dcf3fb;border-radius:5px;"></div>
<svg class="ic" style="left:1805.9px;top:635.1px;width:14px;height:14px;" viewBox="0 0 24 24" fill="none" stroke="#17a9be" stroke-width="2" stroke-linecap="round" stroke-linejoin="round"><path d="M4 20h4l10.5 -10.5a2.828 2.828 0 1 0 -4 -4l-10.5 10.5v4"/><path d="M13.5 6.5l4 4"/></svg>
<div class="b" style="left:1833px;top:626px;width:30px;height:29px;background:#ffdde3;border:1px solid #ffc9d3;border-radius:5px;"></div>
<svg class="ic" style="left:1842px;top:634.7px;width:13.5px;height:13.5px;" viewBox="0 0 24 24" fill="none" stroke="#e3173b" stroke-width="2.3" stroke-linecap="round" stroke-linejoin="round"><path d="M4 7l16 0"/><path d="M10 11l0 6"/><path d="M14 11l0 6"/><path d="M5 7l1 12a2 2 0 0 0 2 2h8a2 2 0 0 0 2 -2l1 -12"/><path d="M9 7v-3a1 1 0 0 1 1 -1h4a1 1 0 0 1 1 1v3"/></svg>
<div class="b" style="left:300px;top:728px;width:1575px;height:1px;background:#ededee;"></div>
<div class="b" style="left:325px;top:688px;width:129px;height:28px;background:#00ad63;border-radius:4px;"></div>
<div class="t" style="left:334.00px;top:695.00px;font-size:12.35px;line-height:14px;letter-spacing:0.004px;color:#fff;-webkit-text-stroke:0.2px #fff;">#020250606123613</div>
<div class="t" style="left:602.00px;top:694.00px;font-size:14.83px;line-height:16px;letter-spacing:-0.569px;color:#2c3545;">Jun 6, 2025</div>
<div class="t" style="left:764.30px;top:694.00px;font-size:14.68px;line-height:16px;letter-spacing:-0.242px;color:#2c3545;">Guest</div>
<div class="t" style="left:1014.80px;top:694.00px;font-size:14.68px;line-height:16px;letter-spacing:-0.307px;color:#2c3545;">$70,0</div>
<div class="t" style="left:1148.40px;top:694.00px;font-size:14.68px;line-height:16px;letter-spacing:-0.276px;color:#2c3545;">Cash On Delivery</div>
<div class="b" style="left:1383px;top:686px;width:200px;height:31px;background:#fff2e0;border-radius:4px;"></div>
<div class="t" style="left:1406.10px;top:693.00px;font-size:14.83px;line-height:16px;letter-spacing:-0.247px;color:#fba72e;-webkit-text-stroke:0.25px #fba72e;">Confirmed : Jun 6, 2025</div>
<div class="b" style="left:1761px;top:686px;width:30px;height:29px;background:#fff3e3;border:1px solid #ffe7c6;border-radius:5px;"></div>
<svg class="ic" style="left:1768.5px;top:693.4px;width:16px;height:16px;" viewBox="0 0 24 24" fill="none" stroke="#ffa41f" stroke-width="1.7" stroke-linecap="round" stroke-linejoin="round"><path d="M10 12a2 2 0 1 0 4 0a2 2 0 0 0 -4 0"/><path d="M21 12c-2.4 4 -5.4 6 -9 6c-3.6 0 -6.6 -2 -9 -6c2.4 -4 5.4 -6 9 -6c3.6 0 6.6 2 9 6"/></svg>
<div class="b" style="left:1797px;top:686px;width:30px;height:29px;background:#e3f6fc;border:1px solid #dcf3fb;border-radius:5px;"></div>
<svg class="ic" style="left:1805.9px;top:695.1px;width:14px;height:14px;" viewBox="0 0 24 24" fill="none" stroke="#17a9be" stroke-width="2" stroke-linecap="round" stroke-linejoin="round"><path d="M4 20h4l10.5 -10.5a2.828 2.828 0 1 0 -4 -4l-10.5 10.5v4"/><path d="M13.5 6.5l4 4"/></svg>
<div class="b" style="left:1833px;top:686px;width:30px;height:29px;background:#ffdde3;border:1px solid #ffc9d3;border-radius:5px;"></div>
<svg class="ic" style="left:1842px;top:694.7px;width:13.5px;height:13.5px;" viewBox="0 0 24 24" fill="none" stroke="#e3173b" stroke-width="2.3" stroke-linecap="round" stroke-linejoin="round"><path d="M4 7l16 0"/><path d="M10 11l0 6"/><path d="M14 11l0 6"/><path d="M5 7l1 12a2 2 0 0 0 2 2h8a2 2 0 0 0 2 -2l1 -12"/><path d="M9 7v-3a1 1 0 0 1 1 -1h4a1 1 0 0 1 1 1v3"/></svg>
<div class="b" style="left:300px;top:783px;width:1575px;height:1px;background:#ededee;"></div>
<div class="b" style="left:325px;top:742px;width:129px;height:28px;background:#00ad63;border-radius:4px;"></div>
<div class="t" style="left:334.00px;top:749.00px;font-size:12.35px;line-height:14px;letter-spacing:0.004px;color:#fff;-webkit-text-stroke:0.2px #fff;">#020250606122637</div>
<div class="t" style="left:602.00px;top:748.00px;font-size:14.83px;line-height:16px;letter-spacing:-0.569px;color:#2c3545;">Jun 6, 2025</div>
<div class="t" style="left:764.30px;top:748.00px;font-size:14.68px;line-height:16px;letter-spacing:-0.242px;color:#2c3545;">Guest</div>
<div class="t" style="left:1014.80px;top:748.00px;font-size:14.68px;line-height:16px;letter-spacing:-0.307px;color:#2c3545;">$55,0</div>
<div class="t" style="left:1148.40px;top:748.00px;font-size:14.68px;line-height:16px;letter-spacing:-0.276px;color:#2c3545;">Cash On Delivery</div>
<div class="b" style="left:1383px;top:740px;width:200px;height:31px;background:#e3f6fd;border-radius:4px;"></div>
<svg class="ic" style="left:1402px;top:746px;width:19px;height:19px;" viewBox="0 0 24 24" fill="none" stroke="#000" stroke-width="3.2" stroke-linecap="round" stroke-linejoin="round"><path d="M5 12l5 5l10 -10"/></svg>
<div class="t" style="left:1423.00px;top:747.00px;font-size:14.83px;line-height:16px;letter-spacing:-0.368px;color:#000;-webkit-text-stroke:0.25px #000;">Pending : Jun 6, 2025</div>
<div class="b" style="left:1761px;top:740px;width:30px;height:29px;background:#fff3e3;border:1px solid #ffe7c6;border-radius:5px;"></div>
<svg class="ic" style="left:1768.5px;top:747.4px;width:16px;height:16px;" viewBox="0 0 24 24" fill="none" stroke="#ffa41f" stroke-width="1.7" stroke-linecap="round" stroke-linejoin="round"><path d="M10 12a2 2 0 1 0 4 0a2 2 0 0 0 -4 0"/><path d="M21 12c-2.4 4 -5.4 6 -9 6c-3.6 0 -6.6 -2 -9 -6c2.4 -4 5.4 -6 9 -6c3.6 0 6.6 2 9 6"/></svg>
<div class="b" style="left:1797px;top:740px;width:30px;height:29px;background:#e3f6fc;border:1px solid #dcf3fb;border-radius:5px;"></div>
<svg class="ic" style="left:1805.9px;top:749.1px;width:14px;height:14px;" viewBox="0 0 24 24" fill="none" stroke="#17a9be" stroke-width="2" stroke-linecap="round" stroke-linejoin="round"><path d="M4 20h4l10.5 -10.5a2.828 2.828 0 1 0 -4 -4l-10.5 10.5v4"/><path d="M13.5 6.5l4 4"/></svg>
<div class="b" style="left:1833px;top:740px;width:30px;height:29px;background:#ffdde3;border:1px solid #ffc9d3;border-radius:5px;"></div>
<svg class="ic" style="left:1842px;top:748.7px;width:13.5px;height:13.5px;" viewBox="0 0 24 24" fill="none" stroke="#e3173b" stroke-width="2.3" stroke-linecap="round" stroke-linejoin="round"><path d="M4 7l16 0"/><path d="M10 11l0 6"/><path d="M14 11l0 6"/><path d="M5 7l1 12a2 2 0 0 0 2 2h8a2 2 0 0 0 2 -2l1 -12"/><path d="M9 7v-3a1 1 0 0 1 1 -1h4a1 1 0 0 1 1 1v3"/></svg>
<div class="b" style="left:300px;top:848px;width:1575px;height:1px;background:#ededee;"></div>
<div class="b" style="left:325px;top:802px;width:136px;height:28px;background:#00ad63;border-radius:4px;"></div>
<div class="t" style="left:334.00px;top:809.00px;font-size:12.35px;line-height:14px;letter-spacing:0.024px;color:#fff;-webkit-text-stroke:0.2px #fff;">#2520250606120046</div>
<div class="t" style="left:602.00px;top:808.00px;font-size:14.83px;line-height:16px;letter-spacing:-0.569px;color:#2c3545;">Jun 6, 2025</div>
<div class="t" style="left:764.30px;top:797.00px;font-size:14.68px;line-height:16px;letter-spacing:-0.010px;color:#2c3545;">Shubham Ghori</div>
<div class="t" style="left:764.00px;top:818.00px;font-size:14.24px;line-height:16px;letter-spacing:0.030px;color:#2c3545;">9875589998</div>
<div class="t" style="left:1014.80px;top:808.00px;font-size:14.68px;line-height:16px;letter-spacing:-0.181px;color:#2c3545;">$220,0</div>
<div class="t" style="left:1148.40px;top:808.00px;font-size:14.68px;line-height:16px;letter-spacing:-0.276px;color:#2c3545;">Cash On Delivery</div>
<div class="b" style="left:1383px;top:800px;width:200px;height:31px;background:#dcdde0;border-radius:4px;"></div>
<div class="t" style="left:1414.90px;top:807.00px;font-size:14.83px;line-height:16px;letter-spacing:-0.403px;color:#343a40;-webkit-text-stroke:0.25px #343a40;">Shipped : Jun 6, 2025</div>
<div class="b" style="left:1761px;top:800px;width:30px;height:29px;background:#fff3e3;border:1px solid #ffe7c6;border-radius:5px;"></div>
<svg class="ic" style="left:1768.5px;top:807.4px;width:16px;height:16px;" viewBox="0 0 24 24" fill="none" stroke="#ffa41f" stroke-width="1.7" stroke-linecap="round" stroke-linejoin="round"><path d="M10 12a2 2 0 1 0 4 0a2 2 0 0 0 -4 0"/><path d="M21 12c-2.4 4 -5.4 6 -9 6c-3.6 0 -6.6 -2 -9 -6c2.4 -4 5.4 -6 9 -6c3.6 0 6.6 2 9 6"/></svg>
<div class="b" style="left:1797px;top:800px;width:30px;height:29px;background:#e3f6fc;border:1px solid #dcf3fb;border-radius:5px;"></div>
<svg class="ic" style="left:1805.9px;top:809.1px;width:14px;height:14px;" viewBox="0 0 24 24" fill="none" stroke="#17a9be" stroke-width="2" stroke-linecap="round" stroke-linejoin="round"><path d="M4 20h4l10.5 -10.5a2.828 2.828 0 1 0 -4 -4l-10.5 10.5v4"/><path d="M13.5 6.5l4 4"/></svg>
<div class="b" style="left:1833px;top:800px;width:30px;height:29px;background:#ffdde3;border:1px solid #ffc9d3;border-radius:5px;"></div>
<svg class="ic" style="left:1842px;top:808.7px;width:13.5px;height:13.5px;" viewBox="0 0 24 24" fill="none" stroke="#e3173b" stroke-width="2.3" stroke-linecap="round" stroke-linejoin="round"><path d="M4 7l16 0"/><path d="M10 11l0 6"/><path d="M14 11l0 6"/><path d="M5 7l1 12a2 2 0 0 0 2 2h8a2 2 0 0 0 2 -2l1 -12"/><path d="M9 7v-3a1 1 0 0 1 1 -1h4a1 1 0 0 1 1 1v3"/></svg>
<div class="b" style="left:300px;top:913px;width:1575px;height:1px;background:#ededee;"></div>
<div class="b" style="left:325px;top:867px;width:136px;height:28px;background:#00ad63;border-radius:4px;"></div>
<div class="t" style="left:334.00px;top:874.00px;font-size:12.35px;line-height:14px;letter-spacing:0.082px;color:#fff;-webkit-text-stroke:0.2px #fff;">#2520250606115839</div>
<div class="t" style="left:602.00px;top:874.00px;font-size:14.83px;line-height:16px;letter-spacing:-0.569px;color:#2c3545;">Jun 6, 2025</div>
<div class="t" style="left:764.30px;top:863.00px;font-size:14.68px;line-height:16px;letter-spacing:-0.010px;color:#2c3545;">Shubham Ghori</div>
<div class="t" style="left:764.00px;top:884.00px;font-size:14.24px;line-height:16px;letter-spacing:0.030px;color:#2c3545;">9875589998</div>
<div class="t" style="left:1014.80px;top:874.00px;font-size:14.68px;line-height:16px;letter-spacing:-0.221px;color:#2c3545;">$1,180,0</div>
<div class="t" style="left:1148.40px;top:874.00px;font-size:14.68px;line-height:16px;letter-spacing:-0.276px;color:#2c3545;">Cash On Delivery</div>
<div class="b" style="left:1383px;top:866px;width:200px;height:31px;background:#ffdde3;border-radius:4px;"></div>
<div class="t" style="left:1419.50px;top:873.00px;font-size:14.83px;line-height:16px;letter-spacing:-0.500px;color:#e3173b;-webkit-text-stroke:0.25px #e3173b;">Cancel : Jun 6, 2025</div>
<div class="b" style="left:1761px;top:866px;width:30px;height:29px;background:#fff3e3;border:1px solid #ffe7c6;border-radius:5px;"></div>
<svg class="ic" style="left:1768.5px;top:873.4px;width:16px;height:16px;" viewBox="0 0 24 24" fill="none" stroke="#ffa41f" stroke-width="1.7" stroke-linecap="round" stroke-linejoin="round"><path d="M10 12a2 2 0 1 0 4 0a2 2 0 0 0 -4 0"/><path d="M21 12c-2.4 4 -5.4 6 -9 6c-3.6 0 -6.6 -2 -9 -6c2.4 -4 5.4 -6 9 -6c3.6 0 6.6 2 9 6"/></svg>
<div class="b" style="left:1797px;top:866px;width:30px;height:29px;background:#e3f6fc;border:1px solid #dcf3fb;border-radius:5px;"></div>
<svg class="ic" style="left:1805.9px;top:875.1px;width:14px;height:14px;" viewBox="0 0 24 24" fill="none" stroke="#17a9be" stroke-width="2" stroke-linecap="round" stroke-linejoin="round"><path d="M4 20h4l10.5 -10.5a2.828 2.828 0 1 0 -4 -4l-10.5 10.5v4"/><path d="M13.5 6.5l4 4"/></svg>
<div class="b" style="left:1833px;top:866px;width:30px;height:29px;background:#ffdde3;border:1px solid #ffc9d3;border-radius:5px;"></div>
<svg class="ic" style="left:1842px;top:874.7px;width:13.5px;height:13.5px;" viewBox="0 0 24 24" fill="none" stroke="#e3173b" stroke-width="2.3" stroke-linecap="round" stroke-linejoin="round"><path d="M4 7l16 0"/><path d="M10 11l0 6"/><path d="M14 11l0 6"/><path d="M5 7l1 12a2 2 0 0 0 2 2h8a2 2 0 0 0 2 -2l1 -12"/><path d="M9 7v-3a1 1 0 0 1 1 -1h4a1 1 0 0 1 1 1v3"/></svg>
<div class="b" style="left:300px;top:968px;width:1575px;height:1px;background:#ededee;"></div>
<div class="b" style="left:325px;top:927px;width:129px;height:28px;background:#00ad63;border-radius:4px;"></div>
<div class="t" style="left:334.00px;top:934.00px;font-size:12.35px;line-height:14px;letter-spacing:0.066px;color:#fff;-webkit-text-stroke:0.2px #fff;">#020250606115641</div>
<div class="t" style="left:602.00px;top:934.00px;font-size:14.83px;line-height:16px;letter-spacing:-0.569px;color:#2c3545;">Jun 6, 2025</div>
<div class="t" style="left:764.30px;top:934.00px;font-size:14.68px;line-height:16px;letter-spacing:-0.242px;color:#2c3545;">Guest</div>
<div class="t" style="left:1014.80px;top:934.00px;font-size:14.68px;line-height:16px;letter-spacing:-0.181px;color:#2c3545;">$140,0</div>
<div class="t" style="left:1148.40px;top:934.00px;font-size:14.68px;line-height:16px;letter-spacing:-0.276px;color:#2c3545;">Cash On Delivery</div>
<div class="b" style="left:1383px;top:926px;width:200px;height:31px;background:#00ad63;border-radius:4px;"></div>
<div class="t" style="left:1410.20px;top:933.00px;font-size:14.83px;line-height:16px;letter-spacing:-0.326px;color:#fff;-webkit-text-stroke:0.25px #fff;">Delivered : Jun 6, 2025</div>
<div class="b" style="left:1761px;top:926px;width:30px;height:29px;background:#fff3e3;border:1px solid #ffe7c6;border-radius:5px;"></div>
<svg class="ic" style="left:1768.5px;top:933.4px;width:16px;height:16px;" viewBox="0 0 24 24" fill="none" stroke="#ffa41f" stroke-width="1.7" stroke-linecap="round" stroke-linejoin="round"><path d="M10 12a2 2 0 1 0 4 0a2 2 0 0 0 -4 0"/><path d="M21 12c-2.4 4 -5.4 6 -9 6c-3.6 0 -6.6 -2 -9 -6c2.4 -4 5.4 -6 9 -6c3.6 0 6.6 2 9 6"/></svg>
<div class="b" style="left:1797px;top:926px;width:30px;height:29px;background:#e3f6fc;border:1px solid #dcf3fb;border-radius:5px;"></div>
<svg class="ic" style="left:1805.9px;top:935.1px;width:14px;height:14px;" viewBox="0 0 24 24" fill="none" stroke="#17a9be" stroke-width="2" stroke-linecap="round" stroke-linejoin="round"><path d="M4 20h4l10.5 -10.5a2.828 2.828 0 1 0 -4 -4l-10.5 10.5v4"/><path d="M13.5 6.5l4 4"/></svg>
<div class="b" style="left:1833px;top:926px;width:30px;height:29px;background:#ffdde3;border:1px solid #ffc9d3;border-radius:5px;"></div>
<svg class="ic" style="left:1842px;top:934.7px;width:13.5px;height:13.5px;" viewBox="0 0 24 24" fill="none" stroke="#e3173b" stroke-width="2.3" stroke-linecap="round" stroke-linejoin="round"><path d="M4 7l16 0"/><path d="M10 11l0 6"/><path d="M14 11l0 6"/><path d="M5 7l1 12a2 2 0 0 0 2 2h8a2 2 0 0 0 2 -2l1 -12"/><path d="M9 7v-3a1 1 0 0 1 1 -1h4a1 1 0 0 1 1 1v3"/></svg>
<div class="t" style="left:300.30px;top:1015.00px;font-size:14.68px;line-height:16px;letter-spacing:-0.080px;color:#2c3545;">Showing 1 to 10 of 15 entries</div>
<div class="b" style="left:1720px;top:1002px;width:33px;height:33px;background:#fff;border:1px solid #dde1e7;border-radius:5px;"></div>
<svg class="ic" style="left:1730px;top:1012px;width:15px;height:15px;" viewBox="0 0 24 24" fill="none" stroke="#6c7480" stroke-width="1.6" stroke-linecap="round" stroke-linejoin="round"><path d="M15 6l-6 6l6 6"/></svg>
<div class="b" style="left:1760px;top:1002px;width:35px;height:35px;background:#00ad63;border-radius:5px;"></div>
<div class="t" style="left:1774.50px;top:1012.00px;font-size:14.10px;line-height:16px;letter-spacing:0.000px;color:#fff;">1</div>
<div class="b" style="left:1800px;top:1002px;width:33px;height:33px;background:#fff;border:1px solid #dde1e7;border-radius:5px;"></div>
<div class="t" style="left:1813.00px;top:1012.00px;font-size:14.10px;line-height:16px;letter-spacing:0.000px;color:#000;">2</div>
<div class="b" style="left:1840px;top:1002px;width:33px;height:33px;background:#fff;border:1px solid #dde1e7;border-radius:5px;"></div>
<svg class="ic" style="left:1850px;top:1012px;width:15px;height:15px;" viewBox="0 0 24 24" fill="none" stroke="#111" stroke-width="1.8" stroke-linecap="round" stroke-linejoin="round"><path d="M9 6l6 6l-6 6"/></svg>
</body></html>
